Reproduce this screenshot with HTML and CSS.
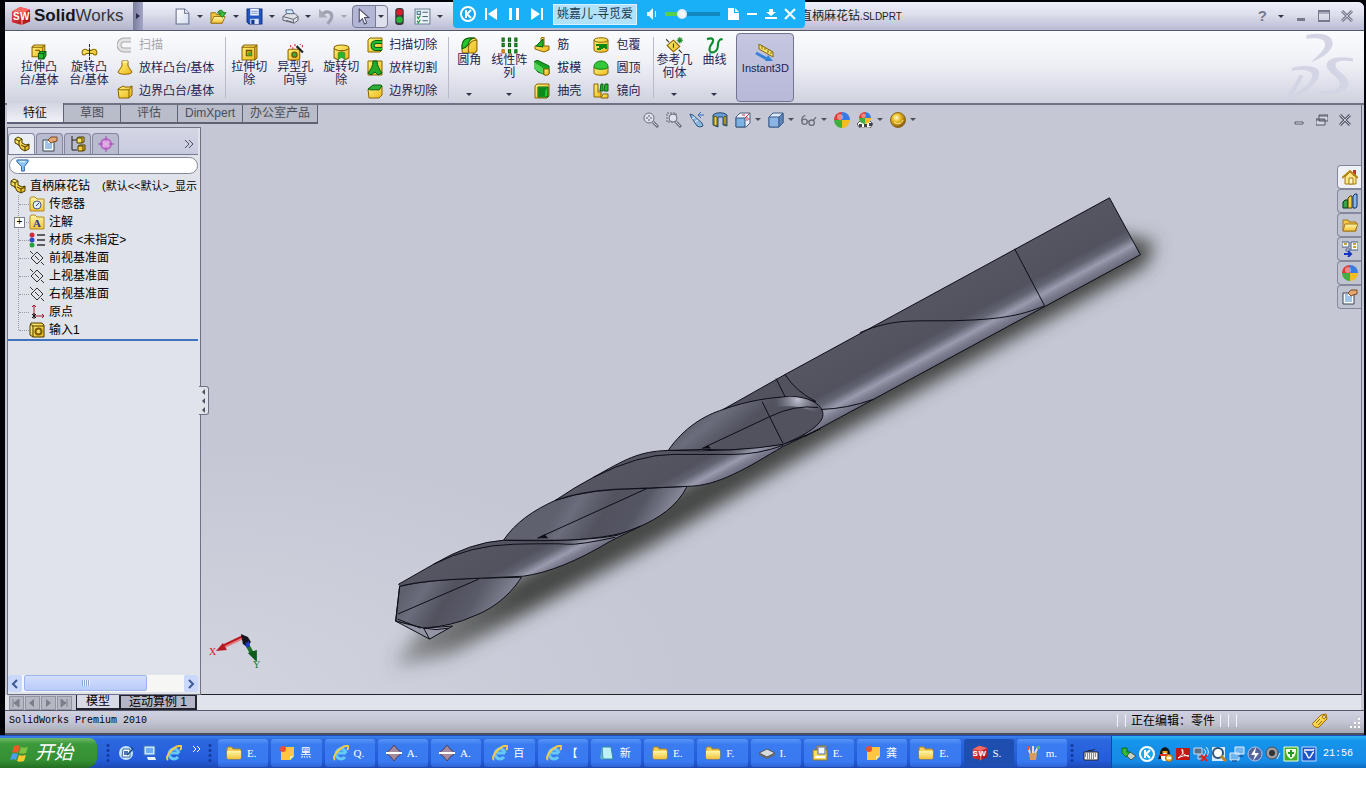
FILE: index.html
```html
<!DOCTYPE html>
<html lang="zh-CN">
<head>
<meta charset="utf-8">
<title>直柄麻花钻.SLDPRT</title>
<link rel="stylesheet" href="styles.css">
</head>
<body>
<svg class="defs" aria-hidden="true">
  <defs>
    <linearGradient id="gold" x1="0" y1="0" x2="1" y2="1"><stop offset="0" stop-color="#fff27a"/><stop offset="1" stop-color="#ecb81c"/></linearGradient>
    <linearGradient id="folder" x1="0" y1="0" x2="0" y2="1"><stop offset="0" stop-color="#fff6a8"/><stop offset="1" stop-color="#f3c23c"/></linearGradient>
    <linearGradient id="page" x1="0" y1="0" x2="1" y2="1"><stop offset="0" stop-color="#fff"/><stop offset="1" stop-color="#d5dcef"/></linearGradient>
    <linearGradient id="red" x1="0" y1="0" x2="1" y2="1"><stop offset="0" stop-color="#f04a4a"/><stop offset="1" stop-color="#a30c14"/></linearGradient>
    <radialGradient id="goldball" cx=".4" cy=".35" r=".7"><stop offset="0" stop-color="#fffbd0"/><stop offset=".4" stop-color="#e8b820"/><stop offset="1" stop-color="#7d4a08"/></radialGradient>
  </defs>
  <symbol id="boss" viewBox="0 0 16 16"><path d="M1 3l2-2h10v9l-2 2H1z" fill="url(#gold)" stroke="#8a6400"/><path d="M1 3h10v9M11 3l2-2M4 6h4v3" fill="none" stroke="#8a6400"/><path d="M7 9l2-2h5v4l-2 3H7z" fill="#27b52c" stroke="#0a5f12"/><path d="M7 9h5v5M12 9l2-2" fill="none" stroke="#0a5f12"/></symbol>
  <symbol id="revolve" viewBox="0 0 16 16"><path d="M8 0v16" stroke="#222" stroke-dasharray="3 1"/><path d="M6 6C4 4 1 5 1 8s3 3 4 1h6c1 2 4 2 4-1s-3-4-5-2z" fill="url(#gold)" stroke="#8a6400"/><path d="M8 5v6" stroke="#222"/></symbol>
  <symbol id="sweepgray" viewBox="0 0 16 16"><path d="M14 3H7a5 5 0 000 10h7" fill="none" stroke="#aaa" stroke-width="5"/><path d="M14 3H7a5 5 0 000 10h7" fill="none" stroke="#e2e2e4" stroke-width="3"/></symbol>
  <symbol id="loft" viewBox="0 0 16 16"><path d="M5 1h6v5l4 6c0 3-14 3-14 0l4-6z" fill="url(#gold)" stroke="#8a6400"/><ellipse cx="8" cy="2" rx="3" ry="1" fill="#fff6a0"/></symbol>
  <symbol id="boundary" viewBox="0 0 16 16"><path d="M1 6l5-3 2 1h5l2-1v9l-3 3H2z" fill="url(#gold)" stroke="#8a6400"/><path d="M1 6c3 2 6 0 11 1l3-4M12 7v8" fill="none" stroke="#8a6400"/></symbol>
  <symbol id="boundarycut" viewBox="0 0 16 16"><path d="M1 6l5-3 2 1h5l2-1v9l-3 3H2z" fill="url(#gold)" stroke="#8a6400"/><path d="M1 6l5-4h3l5 0 1 1-3 4C8 6 4 8 1 6z" fill="#2fae3a" stroke="#0a5f12"/></symbol>
  <symbol id="cut" viewBox="0 0 16 16"><path d="M1 3l2-2h12v12l-2 2H1z" fill="url(#gold)" stroke="#8a6400"/><path d="M1 3h12v12M13 3l2-2" fill="none" stroke="#8a6400"/><path d="M5 6h5v5H5z" fill="#c9a100" stroke="#6c5000"/><path d="M7 8h3v3H7z" fill="#38a838"/></symbol>
  <symbol id="hole" viewBox="0 0 16 16"><path d="M1 6l1-1h10v9l-1 1H1z" fill="url(#gold)" stroke="#8a6400"/><circle cx="7" cy="10" r="2.5" fill="#3aa53a" stroke="#6c5000"/><path d="M9 2l6 6" stroke="#222" stroke-width="2"/><path d="M3 2h1M7 1h1M12 0h1M5 4h1M14 2h1" stroke="#d62a1a" stroke-width="2"/></symbol>
  <symbol id="revcut" viewBox="0 0 16 16"><path d="M1 4c0-4 14-4 14 0v9l-4 2V9c0-2-6-2-6 0v6l-4-2z" fill="url(#gold)" stroke="#8a6400"/><path d="M5 15V9c0-2 6-2 6 0v6l-3-2z" fill="#27b52c"/><path d="M1 4c2 3 12 3 14 0" fill="none" stroke="#8a6400"/></symbol>
  <symbol id="sweepcut" viewBox="0 0 16 16"><path d="M1 3l2-2h12v12l-2 2H1z" fill="url(#gold)" stroke="#8a6400"/><path d="M15 5H9a3 3 0 000 7h6" fill="none" stroke="#0a5f12" stroke-width="4"/><path d="M15 5H9a3 3 0 000 7h6" fill="none" stroke="#25c030" stroke-width="2"/></symbol>
  <symbol id="loftcut" viewBox="0 0 16 16"><path d="M1 1h14v14H1z" fill="url(#gold)" stroke="#8a6400"/><path d="M6 1h4c0 5 3 9 5 12l-4 2-3-3-4 3-3-2C4 9 6 6 6 1z" fill="#22a82a" stroke="#0a5f12"/></symbol>
  <symbol id="fillet" viewBox="0 0 16 16"><path d="M1 8c0-4 3-7 7-7h5l2 2v10l-2 2H2l-1-1z" fill="url(#gold)" stroke="#8a6400"/><path d="M1 8c0-4 3-7 7-7h5c-4 0-6 3-6 6l-3 3-3 1z" fill="#27c52c" stroke="#0a5f12"/><path d="M7 15V9c1-4 4-6 8-6" fill="none" stroke="#8a6400"/></symbol>
  <symbol id="pattern" viewBox="0 0 16 16"><g fill="#25b52c" stroke="#0a5f12"><rect x="1" y="1" width="2" height="3"/><rect x="7" y="1" width="2" height="3"/><rect x="13" y="1" width="2" height="3"/><rect x="1" y="6" width="2" height="3"/><rect x="7" y="6" width="2" height="3"/><rect x="13" y="6" width="2" height="3"/><rect x="7" y="12" width="2" height="3"/><rect x="13" y="12" width="2" height="3"/></g><rect x="1" y="12" width="2" height="3" fill="#f7c63a" stroke="#b25a00"/></symbol>
  <symbol id="rib" viewBox="0 0 16 16"><path d="M7 1l3-1v9h5v4l-5 2-9-3V9l6-2z" fill="url(#gold)" stroke="#8a6400"/><path d="M2 9l7-7v8z" fill="#25b52c" stroke="#0a5f12"/></symbol>
  <symbol id="draft" viewBox="0 0 16 16"><path d="M0 2l3-2 12 6v8l-3 1-8-3-4-4z" fill="#17a320" stroke="#0a5f12"/><path d="M0 2l9 6v6L0 9z" fill="#4fd257"/><path d="M10 9h5v5l-1 1h-4z" fill="url(#gold)" stroke="#8a6400"/></symbol>
  <symbol id="shell" viewBox="0 0 16 16"><path d="M1 3l2-2h12v12l-2 2H1z" fill="url(#gold)" stroke="#8a6400"/><path d="M4 4h10v10H4z" fill="#27c52c" stroke="#0a5f12"/><path d="M5 5h8l-2 3v5H5z" fill="#0d8a1a"/></symbol>
  <symbol id="wrap" viewBox="0 0 16 16"><path d="M1 3c0-3 14-3 14 0v10c0 3-14 3-14 0z" fill="url(#gold)" stroke="#8a6400"/><path d="M1 3c0 3 14 3 14 0" fill="none" stroke="#8a6400"/><path d="M3 8h4v4H4M9 12V8h4v4M9 10h4" fill="none" stroke="#078815" stroke-width="2"/></symbol>
  <symbol id="dome" viewBox="0 0 16 16"><path d="M1 7v6c0 3 14 3 14 0V7z" fill="url(#gold)" stroke="#8a6400"/><path d="M1 7c0-8 14-8 14 0 0 3-14 3-14 0z" fill="#35c73a" stroke="#0a7f12"/></symbol>
  <symbol id="mirror" viewBox="0 0 16 16"><path d="M1 1h4v8h3v5H1z" fill="url(#gold)" stroke="#8a6400"/><path d="M8 1h2v7H7zM12 1h3v7h-4z" fill="#25b52c" stroke="#0a5f12"/><path d="M8 15l2-4h5v4z" fill="url(#gold)" stroke="#8a6400"/></symbol>
  <symbol id="refgeo" viewBox="0 0 16 16"><path d="M7 3l6 6-6 5-6-6z" fill="url(#gold)" stroke="#8a6400"/><path d="M0 2l3 3M12 12l3 3M7 6v4" stroke="#3a3a1a"/><path d="M13 0v6M10 3h6M11 1l4 4M15 1l-4 4" stroke="#158a1c"/></symbol>
  <symbol id="curve" viewBox="0 0 16 16"><path d="M1 2c6-2 7 1 4 5s-2 9 3 7 2-7 4-10 3-2 3-1" fill="none" stroke="#0f8a2c" stroke-width="2"/></symbol>
  <symbol id="instant" viewBox="0 0 20 18"><path d="M4 0l14 8v5L4 5z" fill="#fae36a" stroke="#7a6510"/><path d="M7 2v3M10 4v2M13 6v3M16 8v2" stroke="#7a6510"/><path d="M1 9l11 6" stroke="#3483d6" stroke-width="3"/><path d="M10 17h8l-5-6z" fill="#3483d6"/></symbol>
  <symbol id="new" viewBox="0 0 16 16"><path d="M2 1h8l4 4v10H2z" fill="url(#page)" stroke="#66708e"/><path d="M10 1v4h4" fill="#fff" stroke="#66708e"/></symbol>
  <symbol id="open" viewBox="0 0 18 16"><path d="M1 4h5l1 2h6v9H1z" fill="#f2c53c" stroke="#9b7310"/><path d="M4 8h12l-3 7H1z" fill="url(#folder)" stroke="#9b7310"/><path d="M8 4c2-4 6-3 6 0h3l-4 5-4-4h3c0-2-2-2-4-1z" fill="#3ec43e" stroke="#12791b"/></symbol>
  <symbol id="save" viewBox="0 0 16 16"><path d="M1 1h14v14H3l-2-2z" fill="#2255bd" stroke="#122f7a"/><path d="M4 1h8v6H4z" fill="#f1f5ff"/><path d="M5 3h6M5 5h6" stroke="#7b93ca"/><path d="M4 10h8v5H4z" fill="#d9e2f4"/><path d="M5 11h3v4H5z" fill="#143888"/></symbol>
  <symbol id="print" viewBox="0 0 18 16"><path d="M4 1h7l2 6H5z" fill="#d9ecff" stroke="#44608c"/><path d="M1 8l4-3h9l3 3v4l-4 3-12-3z" fill="#dfe0e6" stroke="#5a5d6b"/><path d="M1 8l11 3 5-3M12 11v4M4 12l7 2" fill="none" stroke="#5a5d6b"/></symbol>
  <symbol id="undo" viewBox="0 0 16 16"><path d="M3 7c4-5 10-4 10 1 0 3-2 4-4 7" fill="none" stroke="#a0a1b0" stroke-width="3"/><path d="M1 1v8h8z" fill="#a9aab8"/></symbol>
  <symbol id="arrowcur" viewBox="0 0 14 16"><path d="M3 1v12l3-3 2 5 2-1-2-5h4z" fill="#fff" stroke="#4c4d66"/></symbol>
  <symbol id="traffic" viewBox="0 0 10 16"><rect x="1" y="0" width="8" height="16" rx="3" fill="#3a3a3c"/><circle cx="5" cy="4" r="3" fill="#d81e2a"/><circle cx="5" cy="11" r="3" fill="#27b336"/></symbol>
  <symbol id="opts" viewBox="0 0 16 16"><path d="M1 1h14v14H1z" fill="#eaf2f6" stroke="#6c8395"/><path d="M3 3h3v3H3z" fill="none" stroke="#4a7a8a"/><path d="M8 4h5M8 8h5M8 12h5" stroke="#49657b"/><path d="M3 8l1 2 2-3M3 12l1 2 2-3" fill="none" stroke="#198a34"/></symbol>
  <symbol id="cube" viewBox="0 0 22 22"><path d="M1 6l9-5 11 3v13l-9 4-11-3z" fill="url(#red)"/><path d="M1 6l9-5 11 3-9 4z" fill="#f46a63"/><path d="M12 8v13" stroke="#ffb7a8"/></symbol>
  <symbol id="mag" viewBox="0 0 16 16"><circle cx="6" cy="6" r="5" fill="#dfe3ec" stroke="#6b6e7c"/><path d="M6 3v6M3 6h6" stroke="#555869"/><path d="M5 5h2v2H5z" fill="#dfe3ec"/><path d="M10 10l5 5" stroke="#6b6e7c" stroke-width="3"/><path d="M10 10l4 4" stroke="#d5d7e0"/></symbol>
  <symbol id="magarea" viewBox="0 0 16 16"><path d="M1 1h9v9H1z" fill="none" stroke="#666a7a" stroke-dasharray="2 1"/><circle cx="7" cy="6" r="4" fill="#dfe3ec" stroke="#6b6e7c"/><path d="M10 10l5 5" stroke="#6b6e7c" stroke-width="3"/><path d="M10 10l4 4" stroke="#d5d7e0"/></symbol>
  <symbol id="prev" viewBox="0 0 16 16"><path d="M1 2l3 1 9 8 1 3-3 1-3-1-6-9z" fill="#8fb8e0" stroke="#31577f"/><path d="M3 7l3-2M6 10l3-2" stroke="#e7f3ff"/><path d="M9 3h6M12 0L9 3l3 3" fill="none" stroke="#3268b5"/></symbol>
  <symbol id="section" viewBox="0 0 16 16"><path d="M1 3c3-3 11-3 14 0v11l-4-1V5H6v10l-5-2z" fill="#6a9ed2" stroke="#274a73"/><path d="M2 4l3 1v9l-3-1zM12 5l2-1v9l-2-1z" fill="#f6d83c" stroke="#5c5410"/></symbol>
  <symbol id="viewor" viewBox="0 0 16 16"><path d="M1 5l4-4h10v10l-4 4H1z" fill="#eef2fa" stroke="#4b5d7c"/><path d="M1 6h9v9H1z" fill="#7db2e2" stroke="#35587f"/><path d="M10 6l5-5M7 3h3M13 7h2M12 5v4" stroke="#c33445"/></symbol>
  <symbol id="shade" viewBox="0 0 16 16"><path d="M1 5l4-4h10v10l-4 4H1z" fill="#dce8f7" stroke="#3f5d8a"/><path d="M1 5h10v10H1z" fill="#8bb4e4" stroke="#3f5d8a"/><path d="M11 5l4-4v10l-4 4z" fill="#5d85bb" stroke="#3f5d8a"/></symbol>
  <symbol id="glasses" viewBox="0 0 18 16"><g fill="none" stroke="#6c6f7b" stroke-width="1.500"><circle cx="4" cy="10" r="3"/><circle cx="12" cy="11" r="3"/><path d="M1 9c0-4 1-6 4-6M7 9l2 1M14 8l3-3"/></g></symbol>
  <symbol id="ball" viewBox="0 0 16 16"><path d="M8 8V0a8 8 0 00-8 8z" fill="#e23a31"/><path d="M8 8h8a8 8 0 00-8-8z" fill="#3a7be0"/><path d="M8 8H0a8 8 0 008 8z" fill="#40af3f"/><path d="M8 8v8a8 8 0 008-8z" fill="#f1bd22"/><circle cx="6" cy="5" r="3" fill="#fff" opacity=".4"/></symbol>
  <symbol id="scene" viewBox="0 0 16 16"><path d="M0 12l3-3h10l3 3-3 4H3z" fill="#fff" stroke="#555"/><path d="M2 12h3v3H2zM7 12h3v3H7zM12 11h3v3h-3z" fill="#444"/><use href="#ball" x="2" y="0" width="12" height="12"/></symbol>
  <symbol id="goldb" viewBox="0 0 16 16"><circle cx="8" cy="8" r="7.5" fill="url(#goldball)" stroke="#8a6a20"/><path d="M4 10c3 3 7 2 9-2" fill="none" stroke="#fff0a0"/></symbol>
  <symbol id="part" viewBox="0 0 16 16"><path d="M1 3l3-2 4 2v4l4 2 3-1v5l-4 2-4-2-2-4-4-2z" fill="url(#gold)" stroke="#4b3a00"/><path d="M1 3l4 2v5M5 5l3-2M7 9l4 2v4M11 11l4-2" fill="none" stroke="#4b3a00"/></symbol>
  <symbol id="props" viewBox="0 0 16 16"><path d="M1 4h11v11H1z" fill="#fff" stroke="#345"/><path d="M3 8h7M3 10h7M3 12h7M3 6h3" stroke="#3e8ad0"/><path d="M6 4l3-3h6v4l-4 1-2 1z" fill="#e6a671" stroke="#7a4a22"/></symbol>
  <symbol id="config" viewBox="0 0 16 16"><path d="M2 0v14h5M2 4h5" fill="none" stroke="#222"/><path d="M7 2l2-1h5v5l-2 1H7zM8 10l2-1h5v5l-2 1H8z" fill="url(#gold)" stroke="#4b3a00"/><path d="M7 2h5v5M8 10h5v5" fill="none" stroke="#4b3a00"/></symbol>
  <symbol id="target" viewBox="0 0 16 16"><circle cx="8" cy="8" r="5" fill="#dcaae2" stroke="#b868c4" stroke-width="2"/><path d="M8 0v16M0 8h16" stroke="#a54bb4"/><path d="M8 5v6M5 8h6" stroke="#f4d5f6"/></symbol>
  <symbol id="funnel" viewBox="0 0 14 14"><path d="M1 1h12v2L9 8v5H6V8L1 3z" fill="#8cc7f4" stroke="#1b5ca8"/><path d="M4 3h6" stroke="#fff"/></symbol>
  <symbol id="sensor" viewBox="0 0 16 16"><path d="M1 3l1-2h4l2 2h7v12H1z" fill="url(#folder)" stroke="#b08a20"/><circle cx="8" cy="9" r="4" fill="#e5eef8" stroke="#41618c"/><path d="M7 10l3-3" stroke="#1b3c70"/></symbol>
  <symbol id="annot" viewBox="0 0 16 16"><path d="M1 3l1-2h4l2 2h7v12H1z" fill="url(#folder)" stroke="#b08a20"/></symbol>
  <symbol id="material" viewBox="0 0 16 16"><circle cx="3" cy="3" r="2.500" fill="#d12a38"/><circle cx="3" cy="8" r="2.500" fill="#2c48c9"/><circle cx="3" cy="13" r="2.500" fill="#24a23a"/><path d="M8 3h8M8 8h8M8 13h8" stroke="#333" stroke-width="1.500"/></symbol>
  <symbol id="plane" viewBox="0 0 16 16"><path d="M8 2l6 6-6 6-6-6zM1 1l3 3M12 12l3 3M6 6l4 4" fill="none" stroke="#333"/></symbol>
  <symbol id="origin" viewBox="0 0 16 16"><path d="M5 1v11h10M3 3l2-2 2 2M13 10l2 2-2 2" fill="none" stroke="#a5172f"/><path d="M3 10l4 4M7 10l-4 4M5 9v6" stroke="#111"/></symbol>
  <symbol id="imported" viewBox="0 0 16 16"><path d="M1 4V13l3 2h11V3l-2-2H2z" fill="url(#gold)" stroke="#4b3a00"/><path d="M4 15V4h11M1 2l3 2" fill="none" stroke="#4b3a00"/><circle cx="9.500" cy="9.500" r="3" fill="#f3d35a" stroke="#7c5c00" stroke-width="2"/></symbol>
  <symbol id="home" viewBox="0 0 16 16"><path d="M3 8v7h11V8L8 3z" fill="#ffe88a" stroke="#a07a10"/><path d="M11 1h3v6h-3z" fill="#c93030"/><path d="M0 9l8-7 8 7" fill="none" stroke="#b98714" stroke-width="2"/><path d="M7 9h4v6H7z" fill="#fff6c8" stroke="#a07a10"/></symbol>
  <symbol id="library" viewBox="0 0 16 16"><path d="M1 9l2-2h3v8H1z" fill="#37a448" stroke="#0b3514"/><path d="M6 5l2-2h2v12H6z" fill="#f0d23a" stroke="#4e3d00"/><path d="M11 3l2-2h2v12l-1 2h-3z" fill="#87b6ee" stroke="#123566"/></symbol>
  <symbol id="fold" viewBox="0 0 16 16"><path d="M1 3h5l1 2h7v9H1z" fill="#f4c84b" stroke="#a27614"/><path d="M3 7h13l-3 7H1z" fill="url(#folder)" stroke="#a27614"/></symbol>
  <symbol id="folder2" viewBox="0 0 16 16"><path d="M1 4l1-2h4l1 2h7l1 1v8l-1 1H2l-1-1z" fill="#f6cf56" stroke="#b18724"/><path d="M1 6h14v7l-1 1H2l-1-1z" fill="url(#folder)"/></symbol>
  <symbol id="palette" viewBox="0 0 16 16"><path d="M0 1h7v5H0zM9 1h7v8H9zM4 8h4v2H4z" fill="#fff" stroke="#485c84"/><path d="M2 3h3M11 3h3M11 6h3" stroke="#c4a52c" stroke-width="2"/><path d="M2 13h6M6 10l3 3-3 3" fill="none" stroke="#1432c4" stroke-width="2"/></symbol>
  <symbol id="ie" viewBox="0 0 16 16"><path d="M13 8H5M13 8a5 5 0 10-1 4" fill="none" stroke="#65c9f8" stroke-width="3"/><path d="M2 15C-2 12 8 0 15 1c1 1 0 3-1 4" fill="none" stroke="#f4ca48" stroke-width="2"/></symbol>
  <symbol id="note" viewBox="0 0 16 16"><path d="M2 2h13v9l-4 4H2z" fill="#ffc543"/><path d="M11 15v-4h4" fill="#fff0a0"/><circle cx="4" cy="4" r="3" fill="#e95132"/></symbol>
  <symbol id="cad" viewBox="0 0 16 16"><path d="M8 0l3 4 5 4-5 4-3 4-3-4-5-4 5-4z" fill="#a48a9c" stroke="#554058"/><path d="M0 8h16" stroke="#fff" stroke-width="2"/></symbol>
  <symbol id="notepad" viewBox="0 0 16 16"><path d="M3 2h9l2 12H4z" fill="#bdf0f7" stroke="#328ba8"/><path d="M3 2L1 13l3 2" fill="#5fb1c8"/></symbol>
  <symbol id="drive" viewBox="0 0 16 16"><path d="M0 8l8-4 8 4-8 4z" fill="#d8dadb" stroke="#555"/><path d="M0 8v2l8 4 8-4V8l-8 4z" fill="#666"/></symbol>
  <symbol id="explore" viewBox="0 0 16 16"><path d="M1 5h4V1h9v4h1v10H1z" fill="#f5da61" stroke="#93772a"/><path d="M6 2h7v7H6z" fill="#f4f7ff" stroke="#596e98"/><path d="M3 11h10v2H3z" fill="#fff"/></symbol>
  <symbol id="brushes" viewBox="0 0 16 16"><path d="M4 8h8l-1 7H5z" fill="#d59d5b"/><path d="M5 8L3 2M8 8V1M10 8l3-6" stroke="#e7dcc9" stroke-width="2"/><path d="M2 1h2v4H2z" fill="#e34b3c"/><path d="M12 1h3v3h-3z" fill="#4ebf5d"/></symbol>
  <symbol id="desk" viewBox="0 0 16 16"><path d="M2 1h11v9H2z" fill="#c9e8ff" stroke="#4579bb"/><path d="M4 3h7v5H4z" fill="#6cacf0"/><path d="M5 12h8l1 3H6z" fill="#e4f2ff"/></symbol>
  <symbol id="mail" viewBox="0 0 16 16"><circle cx="8" cy="8" r="7" fill="#c9e4f5"/><path d="M5 4h7v8H4z" fill="#fff" stroke="#286ba4"/><path d="M6 7h4M6 9h5M13 2l2 2-6 6" fill="none" stroke="#164b8c" stroke-width="1.500"/></symbol>
  <symbol id="kicon" viewBox="0 0 16 16"><circle cx="8" cy="8" r="7" fill="#19a5ef" stroke="#fff" stroke-width="2"/><path d="M6 4v8M11 4L7 8l4 4" fill="none" stroke="#fff" stroke-width="2"/></symbol>
  <symbol id="usb" viewBox="0 0 16 16"><path d="M4 8l5-2 6 4-5 4z" fill="#c9d0c5" stroke="#455"/><path d="M1 2h5v4h3L5 11 1 7z" fill="#33b83a" stroke="#0b6b18"/></symbol>
  <symbol id="qq" viewBox="0 0 16 16"><path d="M3 8c0-9 10-9 10 0l2 5H1z" fill="#151515"/><ellipse cx="8" cy="11" rx="4" ry="4" fill="#fff"/><path d="M3 8h10v2H3z" fill="#e4322a"/><ellipse cx="8" cy="6" rx="3" ry="1" fill="#ffb51d"/><circle cx="12" cy="12" r="3.500" fill="#f9c440" stroke="#a05b0a"/><path d="M10 12h4" stroke="#fff" stroke-width="2"/></symbol>
  <symbol id="pdf" viewBox="0 0 16 16"><path d="M1 2h14v12H1z" fill="#c31616"/><path d="M3 12c5-3 6-7 4-9 0 5 3 7 7 7-4-1-7 0-11 2z" fill="none" stroke="#fff"/></symbol>
  <symbol id="netx" viewBox="0 0 16 16"><path d="M1 2h8v6H1zM5 9h6v4H5z" fill="#5e7085" stroke="#d0dced"/><path d="M11 3c2 2 2 4 0 6M13 1c3 3 3 7 0 10" fill="none" stroke="#e3eeff"/><path d="M8 9l6 6M14 9l-6 6" stroke="#dd1f1f" stroke-width="2"/></symbol>
  <symbol id="find" viewBox="0 0 16 16"><path d="M1 1h13v14H1z" fill="#d4e9ff"/><circle cx="7" cy="7" r="5" fill="#fff" stroke="#26557f" stroke-width="2"/><path d="M10 10l5 5" stroke="#ba8423" stroke-width="3"/></symbol>
  <symbol id="net" viewBox="0 0 16 16"><path d="M6 1h9v7H6zM1 7h9v7H1z" fill="#6db4f0" stroke="#e0efff"/><path d="M3 15h5M9 10h5" stroke="#163a74"/></symbol>
  <symbol id="bolt" viewBox="0 0 16 16"><circle cx="8" cy="8" r="7" fill="#53659a" stroke="#b1c0e8"/><path d="M9 1L4 9h4l-2 6 6-8H8z" fill="#fff"/></symbol>
  <symbol id="spk" viewBox="0 0 16 16"><circle cx="7" cy="7" r="6" fill="#9b9da2" stroke="#4b4d54"/><circle cx="7" cy="7" r="3" fill="#333"/><path d="M12 13l3-6" stroke="#d3e5ff"/></symbol>
  <symbol id="shield" viewBox="0 0 16 16"><path d="M1 1h14v14H1z" fill="#43b02a" stroke="#f4ffce"/><path d="M3 3h10c0 5-1 8-5 10-4-2-5-5-5-10z" fill="#f8ffe8"/><path d="M8 4v7M5 7h6" stroke="#299522" stroke-width="2"/></symbol>
  <symbol id="vee" viewBox="0 0 16 16"><path d="M1 1h14v14H1z" fill="#1d54c5" stroke="#bfdcff"/><path d="M3 4h9l1-1M3 6c3-1 3 6 5 6s3-6 5-6" fill="none" stroke="#fff" stroke-width="1.500"/></symbol>
  <symbol id="keyb" viewBox="0 0 16 16"><path d="M1 6h14v8H1z" fill="#f2f2f2" stroke="#222"/><path d="M2 8h12M2 10h12M4 12h8" stroke="#222" stroke-dasharray="1 1"/><path d="M4 6c1-3 4 0 8-3" fill="none" stroke="#222"/></symbol>
  <symbol id="win" viewBox="0 0 20 18"><path d="M4 2c2-1 4-1 6 0L8 9c-2-1-4-1-6 0z" fill="#ed5a28"/><path d="M11 3c2 1 4 1 7 0l-2 6c-2 1-5 1-7 0z" fill="#7dc242"/><path d="M2 10c2-1 4-1 6 0l-2 6c-2-1-4-1-6 0z" fill="#4aa0ea"/><path d="M9 11c2 1 4 1 7 0l-2 6c-3 1-5 1-7 0z" fill="#fdc82d"/></symbol>
  <symbol id="tag" viewBox="0 0 16 16"><path d="M1 10l8-8 5-1 1 5-8 8c-2 2-8-2-6-4z" fill="url(#gold)" stroke="#a06a08"/><circle cx="12" cy="4" r="1.500" fill="#fff" stroke="#a06a08"/><path d="M4 10l4-4M6 12l4-4" stroke="#a06a08"/></symbol>
</svg>

<div class="desktop">
<main class="window">
  <header class="titlebar">
    <div class="brand">
      <span class="cube"><svg><use href="#cube"/></svg><b>S</b><b>W</b></span>
      <span class="brandname"><strong>Solid</strong>Works</span>
    </div>
    <button class="brandmore" aria-label="菜单"><i class="rt"></i></button>
    <nav class="quick" aria-label="标准工具栏">
      <button aria-label="新建"><svg><use href="#new"/></svg></button><i class="dn"></i>
      <button aria-label="打开"><svg><use href="#open"/></svg></button><i class="dn"></i>
      <button aria-label="保存"><svg><use href="#save"/></svg></button><i class="dn"></i>
      <button aria-label="打印"><svg><use href="#print"/></svg></button><i class="dn"></i>
      <button aria-label="撤销"><svg><use href="#undo"/></svg></button><i class="dn off"></i>
      <span class="picker"><button aria-label="选择"><svg><use href="#arrowcur"/></svg></button><i class="dn"></i></span>
      <button aria-label="重建模型"><svg><use href="#traffic"/></svg></button>
      <button class="opt" aria-label="选项"><svg><use href="#opts"/></svg></button><i class="dn"></i>
    </nav>
    <h1 class="doctitle">直柄麻花钻<span>.SLDPRT</span></h1>
    <div class="winbtns">
      <button class="help" aria-label="帮助">?</button><i class="dn"></i>
      <button aria-label="最小化"><svg viewBox="0 0 12 12"><path d="M2 8h8v3H2z" fill="#777a8c"/></svg></button>
      <button aria-label="最大化"><svg viewBox="0 0 12 12"><path d="M0 1h12v10H0z" fill="none" stroke="#777a8c" stroke-width="2"/><path d="M0 3h12" stroke="#777a8c"/></svg></button>
      <button aria-label="关闭"><svg viewBox="0 0 12 12"><path d="M1 1l10 10M11 1L1 11" stroke="#777a8c" stroke-width="3"/><path d="M1 1l10 10M11 1L1 11" stroke="#c4c6d4"/></svg></button>
    </div>
  </header>

  <section class="ribbon">
    <button class="big"><svg><use href="#boss"/></svg>拉伸凸<br>台/基体</button>
    <button class="big"><svg><use href="#revolve"/></svg>旋转凸<br>台/基体</button>
    <div class="stack">
      <button disabled><svg><use href="#sweepgray"/></svg>扫描</button>
      <button><svg><use href="#loft"/></svg>放样凸台/基体</button>
      <button><svg><use href="#boundary"/></svg>边界凸台/基体</button>
    </div>
    <i class="sep"></i>
    <button class="big mid"><svg><use href="#cut"/></svg>拉伸切<br>除</button>
    <button class="big mid"><svg><use href="#hole"/></svg>异型孔<br>向导</button>
    <button class="big mid"><svg><use href="#revcut"/></svg>旋转切<br>除</button>
    <div class="stack">
      <button><svg><use href="#sweepcut"/></svg>扫描切除</button>
      <button><svg><use href="#loftcut"/></svg>放样切割</button>
      <button><svg><use href="#boundarycut"/></svg>边界切除</button>
    </div>
    <i class="sep"></i>
    <button class="big drop"><svg><use href="#fillet"/></svg>圆角<i class="dn"></i></button>
    <button class="big drop"><svg><use href="#pattern"/></svg>线性阵<br>列<i class="dn"></i></button>
    <div class="stack near">
      <button><svg><use href="#rib"/></svg>筋</button>
      <button><svg><use href="#draft"/></svg>拔模</button>
      <button><svg><use href="#shell"/></svg>抽壳</button>
    </div>
    <div class="stack far">
      <button><svg><use href="#wrap"/></svg>包覆</button>
      <button><svg><use href="#dome"/></svg>圆顶</button>
      <button><svg><use href="#mirror"/></svg>镜向</button>
    </div>
    <i class="sep"></i>
    <button class="big drop"><svg><use href="#refgeo"/></svg>参考几<br>何体<i class="dn"></i></button>
    <button class="big drop"><svg><use href="#curve"/></svg>曲线<i class="dn"></i></button>
    <button class="instant" aria-pressed="true"><svg><use href="#instant"/></svg>Instant3D</button>
    <svg class="dslogo" viewBox="0 0 72 70" aria-hidden="true"><g fill="#d3d5e4"><path d="M22 2C38-1 50 2 49 12C47 20 37 26 27 30C35 22 43 16 41 10C39 5 30 5 22 6z"/><path d="M7 36C22 32 38 34 35 44C31 56 14 66 0 69L15 43L19 44L9 63C18 58 27 52 28 44C28 38 18 37 7 39z"/><path d="M70 26C54 23 41 26 43 35C46 43 58 46 56 54C54 60 44 60 32 60C44 65 60 64 65 54C68 45 53 40 52 34C51 28 60 28 70 29z"/></g></svg>
  </section>

  <div class="work">
    <nav class="cmdtabs">
      <button class="on">特征</button><button>草图</button><button>评估</button><button>DimXpert</button><button>办公室产品</button>
    </nav>

    <aside class="panel">
      <div class="ptabs">
        <button class="on" aria-label="设计树"><svg><use href="#part"/></svg></button>
        <button aria-label="属性"><svg><use href="#props"/></svg></button>
        <button aria-label="配置"><svg><use href="#config"/></svg></button>
        <button aria-label="尺寸专家"><svg><use href="#target"/></svg></button>
        <button class="more" aria-label="更多"><svg viewBox="0 0 10 10"><path d="M1 1l4 4-4 4M5 1l4 4-4 4" fill="none" stroke="#4a4d60"/></svg></button>
      </div>
      <label class="filter"><svg><use href="#funnel"/></svg><input type="text" aria-label="过滤"></label>
      <ul class="tree">
        <li class="root"><svg><use href="#part"/></svg>直柄麻花钻<span class="cfg">(默认&lt;&lt;默认&gt;_显示</span></li>
        <li><svg><use href="#sensor"/></svg>传感器</li>
        <li class="exp"><svg viewBox="0 0 16 16"><use href="#annot"/><text class="letter" x="8" y="13" text-anchor="middle" fill="#1a3a94">A</text></svg>注解</li>
        <li><svg><use href="#material"/></svg>材质 &lt;未指定&gt;</li>
        <li><svg><use href="#plane"/></svg>前视基准面</li>
        <li><svg><use href="#plane"/></svg>上视基准面</li>
        <li><svg><use href="#plane"/></svg>右视基准面</li>
        <li><svg><use href="#origin"/></svg>原点</li>
        <li><svg><use href="#imported"/></svg>输入1</li>
      </ul>
      <div class="hscroll">
        <button aria-label="向左"><svg viewBox="0 0 8 10"><path d="M6 1L2 5l4 4" fill="none" stroke="#3d5a96" stroke-width="2"/></svg></button>
        <span class="track"><i class="thumb"></i></span>
        <button aria-label="向右"><svg viewBox="0 0 8 10"><path d="M2 1l4 4-4 4" fill="none" stroke="#3d5a96" stroke-width="2"/></svg></button>
      </div>
      <button class="splitter" aria-label="折叠面板"><i></i><i></i><i></i></button>
    </aside>

    <section class="view">
      <svg class="scene" viewBox="201 105 1160 590" role="img" aria-label="直柄麻花钻模型">
        <defs>
          <linearGradient id="steel" gradientUnits="userSpaceOnUse" x1="1110" y1="198" x2="1141" y2="255"><stop offset="0" stop-color="#555662"/><stop offset=".55" stop-color="#51525e"/><stop offset=".68" stop-color="#636472"/><stop offset=".81" stop-color="#9a9bae"/><stop offset=".9" stop-color="#7d7e90"/><stop offset="1" stop-color="#686979"/></linearGradient>
          <linearGradient id="fl1" gradientUnits="userSpaceOnUse" x1="712" y1="402" x2="760" y2="462"><stop offset="0" stop-color="#5d5e6b"/><stop offset=".2" stop-color="#6c6d7c"/><stop offset=".5" stop-color="#51525e"/><stop offset="1" stop-color="#51525e"/></linearGradient>
          <linearGradient id="fl2" gradientUnits="userSpaceOnUse" x1="575" y1="482" x2="672" y2="542"><stop offset="0" stop-color="#60616f"/><stop offset=".12" stop-color="#6c6d7c"/><stop offset=".36" stop-color="#51525e"/><stop offset=".6" stop-color="#555663"/><stop offset=".85" stop-color="#868798"/><stop offset="1" stop-color="#9091a2"/></linearGradient>
          <linearGradient id="fl3" gradientUnits="userSpaceOnUse" x1="418" y1="570" x2="506" y2="622"><stop offset="0" stop-color="#60616f"/><stop offset=".15" stop-color="#6c6d7c"/><stop offset=".38" stop-color="#51525e"/><stop offset=".62" stop-color="#5a5b68"/><stop offset="1" stop-color="#9091a2"/></linearGradient>
          <radialGradient id="glint" gradientUnits="userSpaceOnUse" cx="798" cy="400" r="24"><stop offset="0" stop-color="#d5d6e6" stop-opacity=".85"/><stop offset="1" stop-color="#8a8b9c" stop-opacity="0"/></radialGradient>
          <linearGradient id="fade" gradientUnits="userSpaceOnUse" x1="390" y1="0" x2="520" y2="0"><stop offset="0" stop-color="#454744" stop-opacity=".4"/><stop offset="1" stop-color="#454744"/></linearGradient>
          <filter id="soft" x="-10%" y="-10%" width="120%" height="120%"><feGaussianBlur stdDeviation="9"/></filter>
        </defs>
        <path d="M1120 235L1156 243L1146 266L835 438L650 547L450 655L392 668L420 630L780 430z" fill="url(#fade)" filter="url(#soft)"/>
        <g stroke="#0c0d16" stroke-linejoin="round">
          <path d="M1110 198L1141 255L805 437L790 399L785 375z" fill="url(#steel)"/>
          <path d="M785 375L723 410Q752 401 790 397L816 402Q797 393 785 375z" fill="#51525e"/>
          <path d="M668 451C684 428 704 416 723 410C748 401 770 398 790 397C811 397 823 406 823 415C823 425 805 436 783 445Q750 452 703 450z" fill="url(#fl1)"/>
          <path d="M503 541C515 523 533 511 555 501Q590 489 647 489L687 487C676 508 658 519 640 527Q620 538 567 541z" fill="url(#fl2)"/>
          <path d="M395 622L399 587Q430 580 480 579L521 578C507 600 487 612 473 617Q452 627 423 629z" fill="url(#fl3)"/>
          <path d="M555 501Q574 488 593 478C625 460 638 452 668 451Q735 453 783 445Q805 437 821 429L783 447C748 468 718 487 687 487Q640 489 613 490Q580 492 555 501z" fill="url(#steel)"/>
          <path d="M400 587L398 585L433 565Q470 543 503 541Q580 543 617 536L640 527L610 542Q560 572 523 577L480 579Q420 581 400 587z" fill="url(#steel)"/>
          <path d="M395 622L429 640L452 627L423 629z" fill="#9395a4"/>
        </g>
        <path d="M762 402Q776 398 790 397Q818 399 823 414L800 408Q784 405 762 410z" fill="url(#glint)"/>
        <g fill="none" stroke="#0c0d16">
          <path d="M1015 249L1045 306"/>
          <path d="M860 333C895 318 915 322 955 321S1020 317 1045 306"/>
          <path d="M821 410Q848 409 873 400"/>
          <path d="M776 379L785 397M762 402L783 444"/>
          <path d="M702 449L770 417Q795 405 818 408"/>
          <path d="M593 478Q638 455 673 455T733 455T783 446"/>
          <path d="M537 539L647 489"/>
          <path d="M433 565Q470 546 513 545T567 545T615 538"/>
          <path d="M397 615L478 580M395 622L399 587"/>
          <path d="M423 629Q436 632 448 629M423 629L429 640M397 620L420 629"/>
        </g>
        <path d="M537 539l7-4 4 4zM702 449l6-3 3 3z" fill="#0c0d16"/>
        <g>
          <path d="M242 638L221 648" stroke="#e57878" stroke-width="4"/><path d="M242 637L221 647" stroke="#b51a24" stroke-width="2"/>
          <path d="M215 652l7-8 4 7z" fill="#b51a24"/>
          <path d="M246 645l6 11" stroke="#1f6f2a" stroke-width="4"/><path d="M247 654l9-3 0 12z" fill="#0d5c1c"/>
          <path d="M240 635l7 3 3 5-4 5-4-3z" fill="#14141c"/><path d="M244 645l4-3 1 5-3 2z" fill="#1c36c8"/>
          <text class="axis" x="208" y="656" fill="#d9142d">X</text><text class="axis" x="252" y="669" fill="#117a2a">Y</text>
        </g>
      </svg>
      <div class="hud">
        <div class="hudtools">
          <button aria-label="整屏显示"><svg><use href="#mag"/></svg></button>
          <button aria-label="局部放大"><svg><use href="#magarea"/></svg></button>
          <button aria-label="上一视图"><svg><use href="#prev"/></svg></button>
          <button aria-label="剖面视图"><svg><use href="#section"/></svg></button>
          <button class="d" aria-label="视图定向"><svg><use href="#viewor"/></svg><i class="dn"></i></button>
          <button class="d" aria-label="显示样式"><svg><use href="#shade"/></svg><i class="dn"></i></button>
          <button class="d" aria-label="隐藏项目"><svg><use href="#glasses"/></svg><i class="dn"></i></button>
          <button aria-label="编辑外观"><svg><use href="#ball"/></svg></button>
          <button class="d" aria-label="应用布景"><svg><use href="#scene"/></svg><i class="dn"></i></button>
          <button class="d" aria-label="视图设定"><svg><use href="#goldb"/></svg><i class="dn"></i></button>
        </div>
        <div class="docbtns">
          <button aria-label="最小化文档"><svg viewBox="0 0 12 12"><path d="M2 8h8v2H2z" fill="#eee" stroke="#555868"/></svg></button>
          <button aria-label="还原文档"><svg viewBox="0 0 12 12"><path d="M3 1h9v6H3zM0 5h9v6H0z" fill="#d5d7e0" stroke="#555868"/><path d="M0 6h9M3 2h9" stroke="#555868"/></svg></button>
          <button aria-label="关闭文档"><svg viewBox="0 0 12 12"><path d="M1 1l10 10M11 1L1 11" stroke="#555868" stroke-width="3"/><path d="M1 1l10 10M11 1L1 11" stroke="#cfd1dc"/></svg></button>
        </div>
      </div>
      <div class="taskpane">
        <button class="on" aria-label="资源"><svg><use href="#home"/></svg></button>
        <button aria-label="设计库"><svg><use href="#library"/></svg></button>
        <button aria-label="文件探索器"><svg><use href="#fold"/></svg></button>
        <button aria-label="视图调色板"><svg><use href="#palette"/></svg></button>
        <button aria-label="外观"><svg><use href="#ball"/></svg></button>
        <button aria-label="自定义属性"><svg><use href="#props"/></svg></button>
      </div>
    </section>
  </div>

  <nav class="sheettabs">
    <span class="steps">
      <button aria-label="第一个"><svg viewBox="0 0 12 12"><path d="M3 2v8M9 2v8L4 6z" fill="#7c7e8b" stroke="#7c7e8b"/></svg></button>
      <button aria-label="上一个"><svg viewBox="0 0 12 12"><path d="M8 2v8L3 6z" fill="#7c7e8b"/></svg></button>
      <button aria-label="下一个"><svg viewBox="0 0 12 12"><path d="M4 2v8l5-4z" fill="#7c7e8b"/></svg></button>
      <button aria-label="最后一个"><svg viewBox="0 0 12 12"><path d="M9 2v8M3 2v8l5-4z" fill="#7c7e8b" stroke="#7c7e8b"/></svg></button>
    </span>
    <button class="sheet on">模型</button><button class="sheet">运动算例 1</button>
  </nav>

  <footer class="status">
    <span class="product">SolidWorks Premium 2010</span>
    <i class="bar"></i><i class="bar"></i>
    <span class="editing">正在编辑：零件</span>
    <i class="bar"></i><i class="bar"></i><i class="bar"></i>
    <button class="tag" aria-label="标签"><svg><use href="#tag"/></svg></button>
    <svg class="grip" viewBox="0 0 12 12"><path d="M9 1h2M5 5h2M9 5h2M1 9h2M5 9h2M9 9h2" stroke="#fff" stroke-width="2"/></svg>
  </footer>
</main>

<div class="player">
  <svg class="klogo"><use href="#kicon"/></svg>
  <button aria-label="上一首"><svg viewBox="0 0 14 14"><path d="M1 1h2v12H1zM13 1v12L4 7z" fill="#fff"/></svg></button>
  <button aria-label="暂停"><svg viewBox="0 0 14 14"><path d="M2 1h3v12H2zM9 1h3v12H9z" fill="#fff"/></svg></button>
  <button aria-label="下一首"><svg viewBox="0 0 14 14"><path d="M11 1h2v12h-2zM1 1v12l9-6z" fill="#fff"/></svg></button>
  <span class="song">姚嘉儿-寻觅爱</span>
  <button class="vol" aria-label="静音"><svg viewBox="0 0 12 14"><path d="M1 5h2l4-4v12L3 9H1zM9 4h1v6H9z" fill="#e5f6ff"/></svg></button>
  <input class="slider" type="range" value="26" aria-label="音量">
  <button class="s1" aria-label="歌词"><svg viewBox="0 0 14 14"><path d="M2 1h6v5h5v7H2zM9 1l4 4H9z" fill="#fff"/></svg></button>
  <button class="s1" aria-label="最小化播放器"><svg viewBox="0 0 14 14"><path d="M2 6h10v2H2z" fill="#fff"/></svg></button>
  <button class="s1" aria-label="下载"><svg viewBox="0 0 14 14"><path d="M5 2h4v3h3L7 9 2 5h3zM1 10h12v2H1z" fill="#fff"/></svg></button>
  <button class="s1" aria-label="关闭播放器"><svg viewBox="0 0 14 14"><path d="M2 2l10 10M12 2L2 12" stroke="#fff" stroke-width="2"/></svg></button>
</div>
</div>

<footer class="taskbar">
  <button class="start"><svg><use href="#win"/></svg>开始</button>
  <i class="grab"></i>
  <div class="launch">
    <a href="#" aria-label="邮件"><svg><use href="#mail"/></svg></a>
    <a href="#" aria-label="显示桌面"><svg><use href="#desk"/></svg></a>
    <a href="#" aria-label="浏览器"><svg><use href="#ie"/></svg></a>
    <svg class="chev" viewBox="0 0 10 8"><path d="M1 1l3 3-3 3M5 1l3 3-3 3" fill="none" stroke="#fff"/></svg>
  </div>
  <i class="grab"></i>
  <div class="tasks">
    <button><svg><use href="#folder2"/></svg>E.</button>
    <button><svg><use href="#note"/></svg>黑</button>
    <button><svg><use href="#ie"/></svg>Q.</button>
    <button><svg><use href="#cad"/></svg>A.</button>
    <button><svg><use href="#cad"/></svg>A.</button>
    <button><svg><use href="#ie"/></svg>百</button>
    <button><svg><use href="#ie"/></svg>【</button>
    <button><svg><use href="#notepad"/></svg>新</button>
    <button><svg><use href="#folder2"/></svg>E.</button>
    <button><svg><use href="#folder2"/></svg>F.</button>
    <button><svg><use href="#drive"/></svg>I.</button>
    <button><svg><use href="#explore"/></svg>E.</button>
    <button><svg><use href="#note"/></svg>龚</button>
    <button><svg><use href="#folder2"/></svg>E.</button>
    <button class="on"><span class="cube small"><svg><use href="#cube"/></svg><b>S</b><b>W</b></span>S.</button>
    <button><svg><use href="#brushes"/></svg>m.</button>
  </div>
  <i class="grab"></i>
  <button class="ime" aria-label="输入法"><svg><use href="#keyb"/></svg></button>
  <div class="tray">
    <svg><use href="#usb"/></svg><svg><use href="#kicon"/></svg><svg><use href="#qq"/></svg><svg><use href="#pdf"/></svg><svg><use href="#netx"/></svg><svg><use href="#find"/></svg><svg><use href="#net"/></svg><svg><use href="#bolt"/></svg><svg><use href="#spk"/></svg><svg><use href="#shield"/></svg><svg><use href="#vee"/></svg>
    <time>21:56</time>
  </div>
</footer>
</body>
</html>
```

FILE: styles.css
```css
* { box-sizing: border-box; }
body {
  margin: 0;
  background: #fff;
  color: #000;
  font: 12px/18px "Liberation Sans", "Noto Sans CJK SC", sans-serif;
}
button, input { font: inherit; color: inherit; }
button { margin: 0; padding: 0; border: 0; background: none; }
svg { display: block; width: 16px; height: 16px; flex: none; }
.defs { position: absolute; width: 0; height: 0; }

.dn {
  flex: none;
  border: 3px solid transparent;
  border-top-color: #33354a;
  border-bottom: 0;
}
.dn.off { border-top-color: #a5a6b4; }

.desktop {
  position: relative;
  padding: 2px 2px 0 5px;
  background: #020209;
}
.window {
  display: flex;
  flex-direction: column;
  border-radius: 0 6px 0 0;
  overflow: hidden;
  background: #c5c8d4;
  border-bottom: 2px solid #4a4d5c;
}

/* title bar */
.titlebar {
  display: flex;
  align-items: stretch;
  height: 29px;
  border-bottom: 1px solid #55586a;
  background: linear-gradient(#eef0fc, #dcdeec 45%, #b9bbd4);
}
.brand {
  display: flex;
  align-items: center;
  gap: 3px;
  width: 128px;
  padding-left: 6px;
  background: linear-gradient(#e4e5f0, #b4b6cc);
}
.cube { position: relative; width: 20px; height: 20px; flex: none; }
.cube svg { width: 20px; height: 20px; }
.cube b {
  position: absolute;
  left: 2px;
  top: 5px;
  color: #fff;
  font: bold 10px/12px "Liberation Sans", sans-serif;
}
.cube b + b { left: 9px; }
.cube.small, .cube.small svg { width: 16px; height: 16px; }
.cube.small b { left: 1px; top: 3px; font-size: 8px; }
.cube.small b + b { left: 7px; }
.brandname { font-size: 17px; color: #33343c; }
.brandname strong { color: #14151c; }
.brandmore {
  display: flex;
  align-items: center;
  justify-content: center;
  width: 10px;
  background: linear-gradient(90deg, #7b7d9c, #a3a5c4);
}
.rt { border: 3px solid transparent; border-left: 4px solid #2a2b52; border-right: 0; }
.quick { display: flex; align-items: center; padding-left: 29px; }
.quick button { display: flex; justify-content: center; width: 20px; }
.quick > .dn { margin: 0 5px; }
.quick svg { width: 17px; height: 17px; }
.picker {
  display: flex;
  align-items: center;
  gap: 5px;
  height: 23px;
  padding-right: 3px;
  border: 1px solid #777a95;
  border-radius: 4px;
  background: linear-gradient(90deg, #b3b5d5 22px, #777a95 22px, #777a95 23px, #dfe0ee 23px);
}
.picker + button { margin-left: 1px; }
.quick .opt { margin-left: 3px; }
.doctitle {
  flex: 1;
  margin: 0;
  padding-right: 4px;
  text-align: center;
  font-size: 12px;
  font-weight: normal;
  line-height: 29px;
  color: #222;
}
.doctitle span { font-size: 10px; }
.winbtns { display: flex; align-items: center; gap: 11px; padding-right: 11px; }
.winbtns svg, .docbtns svg { width: 12px; height: 12px; }
.help { font-size: 15px; font-weight: bold; color: #777a8c; }

/* ribbon */
.ribbon {
  position: relative;
  display: flex;
  align-items: stretch;
  padding: 2px 8px 1px 9px;
  border-bottom: 2px solid #6f7284;
  background: linear-gradient(#fbfcfe, #eff0f6 45%, #cfd1df);
  color: #23244f;
}
.big {
  display: flex;
  flex-direction: column;
  align-items: center;
  width: 50px;
  padding-top: 11px;
  line-height: 13px;
}
.big svg { width: 17px; height: 17px; }
.mid { width: 46px; }
.drop { position: relative; width: 40px; padding-top: 4px; }
.drop .dn { position: absolute; bottom: 6px; left: 17px; }
.stack { display: flex; flex-direction: column; margin-left: 3px; }
.stack button {
  display: flex;
  align-items: center;
  gap: 6px;
  height: 23px;
  white-space: nowrap;
}
.stack button:disabled { color: #a4a5ae; }
.stack.near { margin-left: 5px; }
.stack.near button { gap: 7px; }
.stack.far { margin-left: 12px; margin-right: 2px; }
.stack.far button { gap: 7px; }
.sep { width: 1px; margin: 4px 0 4px 11px; background: #b9bbca; }
.instant {
  display: flex;
  flex-direction: column;
  align-items: center;
  width: 58px;
  margin-left: 2px;
  padding-top: 10px;
  border: 1px solid #73758f;
  border-radius: 4px;
  background: linear-gradient(#c5c6df, #b7b9d9);
  font-size: 11px;
  line-height: 13px;
}
.instant svg { width: 20px; height: 18px; }
.dslogo { width: 72px; height: 68px; margin-left: auto; }

/* work area */
.work {
  display: grid;
  grid-template-columns: 196px minmax(0, 1fr);
  grid-template-rows: 22px 568px;
}
.cmdtabs {
  grid-area: 1 / 1 / 2 / 3;
  z-index: 2;
  display: flex;
  justify-self: start;
  align-items: flex-start;
  padding-left: 2px;
}
.cmdtabs button {
  min-width: 57px;
  height: 19px;
  padding: 0 7px;
  border: solid #5f6274;
  border-width: 0 1px 2px 0;
  background: #b9bcc9;
  color: #4b4d58;
  line-height: 17px;
}
.cmdtabs .on {
  height: 21px;
  margin-top: -2px;
  background: linear-gradient(#d3d5e1, #f0f1f7);
  color: #111;
  line-height: 20px;
}
.panel {
  grid-area: 2 / 1 / 3 / 2;
  position: relative;
  display: flex;
  flex-direction: column;
  margin-left: 2px;
  padding-right: 2px;
  border: 1px solid #6f7284;
  background: #e1e3eb;
}
.ptabs {
  display: flex;
  align-items: flex-end;
  gap: 1px;
  height: 27px;
  border-bottom: 1px solid #777a8e;
  background: linear-gradient(#d5d7e6, #c8cadf);
}
.ptabs button {
  display: flex;
  align-items: center;
  justify-content: center;
  width: 27px;
  height: 21px;
  border: 1px solid #8587a0;
  border-bottom: 0;
  border-radius: 4px 4px 0 0;
  background: #b9bbce;
}
.ptabs .on { background: #eceef5; }
.ptabs .more { width: 18px; margin-left: auto; border: 0; background: none; }
.ptabs .more svg { width: 10px; height: 10px; }
.filter {
  display: flex;
  align-items: center;
  gap: 4px;
  height: 17px;
  margin: 2px 0 3px 1px;
  padding: 0 6px;
  border: 1px solid #85889c;
  border-radius: 9px;
  background: #fff;
}
.filter svg { width: 13px; height: 13px; }
.filter input { flex: 1; min-width: 0; height: 14px; padding: 0; border: 0; outline: 0; background: none; }
.tree {
  position: relative;
  margin: 0;
  padding: 0;
  list-style: none;
  border-bottom: 2px solid #3f73bf;
}
.tree::before {
  content: "";
  position: absolute;
  left: 10px;
  top: 18px;
  bottom: 9px;
  border-left: 1px dotted #9799a5;
}
.tree li {
  position: relative;
  display: flex;
  align-items: center;
  gap: 4px;
  height: 18px;
  padding-left: 21px;
  white-space: nowrap;
}
.tree li::before {
  content: "";
  position: absolute;
  left: 11px;
  width: 10px;
  border-top: 1px dotted #9799a5;
}
.tree .root { padding-left: 2px; }
.tree .root::before { display: none; }
.tree .exp::after {
  content: "+";
  position: absolute;
  left: 6px;
  width: 9px;
  height: 9px;
  border: 1px solid #7b7d8c;
  background: #fff;
  font-size: 10px;
  line-height: 7px;
  text-align: center;
}
.letter { font: bold 11px "Liberation Serif", serif; }
.cfg { margin-left: 8px; font-size: 11px; }
.hscroll { display: flex; height: 17px; margin: auto 0 2px; background: #f6f6f4; }
.hscroll button {
  display: flex;
  align-items: center;
  justify-content: center;
  width: 14px;
  border-radius: 2px;
  background: #c9d8fb;
}
.hscroll svg { width: 8px; height: 10px; }
.track { flex: 1; }
.thumb {
  display: flex;
  width: 76%;
  height: 16px;
  margin-left: 2px;
  border: 1px solid #9db4ee;
  border-radius: 2px;
  background: linear-gradient(#d2defd, #b9cbf8);
}
.thumb::after {
  content: "";
  width: 8px;
  height: 6px;
  margin: auto;
  background: repeating-linear-gradient(90deg, #8ea6dc 0 1px, #eef3ff 1px 2px);
}
.splitter {
  position: absolute;
  z-index: 3;
  right: -9px;
  top: 258px;
  display: flex;
  flex-direction: column;
  align-items: center;
  justify-content: space-around;
  width: 10px;
  height: 29px;
  border: 1px solid #6f7284;
  border-left: 0;
  border-radius: 0 3px 3px 0;
  background: #e1e3eb;
}
.splitter i { border: 3px solid transparent; border-right-color: #4d4f62; border-left: 0; }

.view {
  grid-area: 1 / 2 / 3 / 3;
  position: relative;
  display: flex;
  flex-direction: column;
  margin-right: 2px;
  border-right: 1px solid #6f7284;
  border-bottom: 1px solid #22232c;
  background: radial-gradient(ellipse at 0 100%, #d2d5df, #c5c8d4 30%);
}
.scene { position: absolute; left: 0; top: 0; width: 100%; height: 100%; }
.axis { font: 10px "Liberation Serif", serif; }
.hud {
  position: relative;
  display: grid;
  grid-template-columns: 1fr auto 1fr;
  align-items: center;
  height: 29px;
  padding-right: 4px;
}
.hudtools { grid-column: 2; display: flex; gap: 5px; }
.hudtools button { display: flex; align-items: center; justify-content: center; width: 18px; }
.hudtools .d { width: 28px; gap: 4px; }
.hudtools .dn { border-top-color: #4d4f5e; }
.docbtns { display: flex; gap: 11px; justify-self: end; padding-right: 6px; }
.taskpane { position: relative; align-self: flex-end; margin-top: 31px; }
.taskpane button {
  display: flex;
  align-items: center;
  justify-content: center;
  width: 24px;
  height: 24px;
  border: 1px solid #85889c;
  border-right: 0;
  border-radius: 4px 0 0 4px;
  background: #c0c3d0;
}
.taskpane .on { background: #f0f1f7; }

/* sheet tabs and status bar */
.sheettabs {
  display: flex;
  height: 15px;
  padding-left: 4px;
  border-right: 3px solid #c5c8d4;
  background: #e1e3eb;
}
.steps { display: flex; gap: 1px; padding: 1px 4px 0 0; background: #c5c8d4; }
.steps button { width: 15px; border: 1px solid #92949f; background: #b5b7c2; }
.steps svg { width: 12px; height: 12px; }
.sheet {
  padding: 0 8px;
  border: solid #22232c;
  border-width: 1px 2px 2px 0;
  background: #b3b6c6;
  line-height: 12px;
}
.sheet.on { padding: 0 9px; border-left-width: 1px; border-top: 0; background: #d8dae6; line-height: 13px; }
.status {
  display: flex;
  align-items: center;
  gap: 7px;
  height: 23px;
  padding: 0 3px 3px 4px;
  border-top: 1px solid #55586a;
  background: linear-gradient(#cfd1e0, #c3c5d3 50%, #a7a9b4);
}
.product { margin-right: auto; font: 10px/18px "Liberation Mono", monospace; }
.bar { width: 1px; height: 13px; background: #f1f2f8; }
.editing { margin: 0 -2px; }
.tag { margin: 0 14px 0 68px; }
.grip { width: 12px; height: 12px; align-self: flex-end; }

/* music player overlay */
.player {
  position: absolute;
  z-index: 5;
  left: 453px;
  top: 0;
  display: flex;
  align-items: center;
  width: 352px;
  height: 28px;
  padding-left: 7px;
  border-radius: 0 0 4px 4px;
  background: #19b0f7;
}
.player svg { width: 14px; height: 14px; }
.player .klogo { width: 16px; height: 16px; margin-right: 8px; }
.player button { margin-right: 9px; }
.song {
  padding: 0 3px;
  border: 1px solid #d9f2ff;
  background: #b2e2fa;
  color: #1c3a4c;
  line-height: 19px;
  white-space: nowrap;
}
.player .vol { margin: 0 6px 0 8px; }
.slider {
  appearance: none;
  width: 55px;
  height: 12px;
  margin: 0 1px 0 0;
  background: linear-gradient(90deg, #58d04e 16px, #1287c0 16px) center / 100% 4px no-repeat;
}
.slider::-webkit-slider-thumb {
  appearance: none;
  width: 10px;
  height: 10px;
  border-radius: 50%;
  background: radial-gradient(#fff, #cfdfee);
}
.player .s1 { margin: 0 0 0 5px; }

/* taskbar */
.taskbar {
  display: flex;
  align-items: stretch;
  height: 33px;
  border-top: 1px solid #1f4fbd;
  background: linear-gradient(#3b82ee, #2c68de 12%, #245cdc 75%, #1d48b2);
  color: #fff;
}
.start {
  display: flex;
  align-items: center;
  gap: 5px;
  width: 97px;
  margin-top: 2px;
  padding-left: 10px;
  border-radius: 0 8px 10px 0;
  background: linear-gradient(#6fb86a, #3b9a3a 20%, #348f33 75%, #226f22);
  font-size: 19px;
  font-style: italic;
}
.start svg { width: 20px; height: 18px; }
.grab {
  width: 4px;
  margin: 7px 8px 4px 9px;
  background: radial-gradient(circle, #123a9c 1px, transparent 2px) 0 0 / 4px 5px;
}
.launch { display: flex; align-items: center; gap: 8px; padding-top: 2px; }
.chev { width: 10px; height: 8px; margin: -8px 3px 0 2px; }
.tasks { flex: 1; display: flex; gap: 3px; padding: 3px 0 1px; }
.tasks + .grab, .launch + .grab { margin: 7px 6px 4px 3px; }
.tasks button {
  display: flex;
  align-items: center;
  flex: 1;
  gap: 5px;
  min-width: 0;
  padding-left: 8px;
  border-radius: 3px;
  background: linear-gradient(#5795f7, #3a7bf0 20%, #397af2 80%, #2f65d4);
  font: 11px/16px "Liberation Serif", "Noto Sans CJK SC", serif;
  overflow: hidden;
}
.tasks .on { background: #1e4eb0; }
.ime { margin: 3px 12px 0 3px; }
.tray {
  display: flex;
  align-items: center;
  gap: 2px;
  padding: 3px 13px 0 9px;
  border-left: 1px solid #0c4aa8;
  background: linear-gradient(#2fb3f4, #1594ea 15%, #158be8 80%, #0f6cc0);
}
.tray time { margin-left: 4px; font: 10px/16px "Liberation Mono", monospace; }
```
